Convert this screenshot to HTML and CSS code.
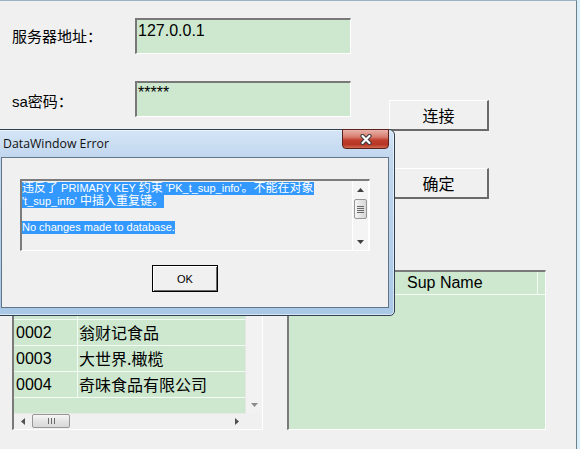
FILE: index.html
```html
<!DOCTYPE html>
<html lang="zh">
<head>
<meta charset="utf-8">
<title>DataWindow</title>
<link rel="stylesheet" href="styles.css">
</head>
<body>
<div class="window">
  <div class="form">
    <div class="row">
      <span class="label label-1">服务器地址：</span>
      <div class="field">127.0.0.1</div>
    </div>
    <div class="row row-pwd">
      <span class="label label-2">sa密码：</span>
      <div class="field field-pwd">*****</div>
      <button class="btn btn-connect">连接</button>
    </div>
    <div class="row row-ok">
      <button class="btn btn-confirm">确定</button>
    </div>
    <div class="grids">
      <div class="dw dw-list">
        <div class="dw-data">
          <div class="dw-row dw-head"><span class="c1"></span><span class="c2"></span></div>
          <div class="dw-row"><span class="c1"></span><span class="c2"></span></div>
          <div class="dw-row"><span class="c1">0002</span><span class="c2">翁财记食品</span></div>
          <div class="dw-row"><span class="c1">0003</span><span class="c2">大世界.橄榄</span></div>
          <div class="dw-row"><span class="c1">0004</span><span class="c2">奇味食品有限公司</span></div>
        </div>
        <div class="vsb">
          <div class="sb-btn"><svg width="7" height="4" viewBox="0 0 7 4"><polygon points="0,4 7,4 3.5,0" fill="#a6a6a6"/></svg></div>
          <div class="sb-track"></div>
          <div class="sb-btn"><svg width="7" height="4" viewBox="0 0 7 4"><polygon points="0,0 7,0 3.5,4" fill="#8c8c8c"/></svg></div>
        </div>
        <div class="hsb">
          <div class="sb-btn"><svg width="4" height="7" viewBox="0 0 4 7"><polygon points="4,0 4,7 0,3.5" fill="#505050"/></svg></div>
          <div class="hthumb"><svg width="7" height="6" viewBox="0 0 7 6"><path d="M0.5 0v6M3.5 0v6M6.5 0v6" stroke="#6a6a6a" stroke-width="1"/></svg></div>
          <div class="sb-track"></div>
          <div class="sb-btn"><svg width="4" height="7" viewBox="0 0 4 7"><polygon points="0,0 0,7 4,3.5" fill="#505050"/></svg></div>
        </div>
        <div class="sb-corner"></div>
      </div>
      <div class="dw dw-detail">
        <div class="dw-head2"><span class="h1"></span><span class="h2">Sup Name</span><span class="h3"></span></div>
      </div>
    </div>
  </div>

  <div class="dialog">
    <div class="dlg-title">DataWindow Error</div>
    <div class="dlg-close"><svg width="14" height="11" viewBox="0 0 14 11"><path d="M3.5 2L10.5 9M10.5 2L3.5 9" stroke="#3a3a3a" stroke-width="4.2" stroke-linecap="round"/><path d="M3.5 2L10.5 9M10.5 2L3.5 9" stroke="#ffffff" stroke-width="2.2" stroke-linecap="round"/></svg></div>
    <div class="dlg-client">
      <div class="msgbox">
        <div class="msg-text">
          <div class="ln"><span class="sel"><span class="zh">违反了</span> PRIMARY KEY <span class="zh">约束</span> 'PK_t_sup_info'<span class="zh">。不能在对象</span></span></div>
          <div class="ln"><span class="sel">'t_sup_info' <span class="zh">中插入重复键。</span></span></div>
          <div class="ln"></div>
          <div class="ln"><span class="sel">No changes made to database.</span></div>
        </div>
        <div class="msg-sb">
          <div class="sb-btn"><svg width="7" height="4" viewBox="0 0 7 4"><polygon points="0,4 7,4 3.5,0" fill="#404040"/></svg></div>
          <div class="vthumb"><svg width="7" height="7" viewBox="0 0 7 7"><path d="M0 0.5h7M0 2.5h7M0 4.5h7M0 6.5h7" stroke="#6a6a6a" stroke-width="1"/></svg></div>
          <div class="sb-track"></div>
          <div class="sb-btn"><svg width="7" height="4" viewBox="0 0 7 4"><polygon points="0,0 7,0 3.5,4" fill="#404040"/></svg></div>
        </div>
      </div>
      <button class="ok-btn">OK</button>
    </div>
  </div>
</div>
</body>
</html>
```

FILE: styles.css
```css
* { box-sizing: border-box; }

body {
  margin: 0;
  width: 580px;
  height: 449px;
  overflow: hidden;
  background: #d8eef8;
  font-family: "Liberation Sans", "Noto Sans CJK SC", sans-serif;
  color: #000;
}

.window {
  position: relative;
  width: 577px;
  height: 449px;
  background: #f0f0f0;
  border-top: 1px solid #9fb2c4;
  border-right: 1px solid #6f7f8d;
}

.form {
  padding: 17px 0 0 12px;
  display: flex;
  flex-direction: column;
  align-items: flex-start;
}

.row {
  display: flex;
  align-items: flex-start;
}

.label {
  width: 123px;
  font-size: 15px;
  line-height: 20px;
  font-family: "Liberation Sans", "Noto Sans CJK SC", sans-serif;
}
.label-1 { padding-top: 9px; }
.label-2 { padding-top: 11px; }

.field {
  width: 216px;
  height: 36px;
  background: #cde8cf;
  border-style: solid;
  border-width: 2px 1px 1px 2px;
  border-color: #787878 #ffffff #ffffff #787878;
  font-size: 16px;
  line-height: 18px;
  padding: 2px 0 0 1px;
}

.row-pwd { margin-top: 27px; }
.field-pwd { padding-top: 1px; }

.btn {
  width: 100px;
  height: 31px;
  padding: 0;
  background: #f0f0f0;
  border-style: solid;
  border-width: 1px 2px 2px 1px;
  border-color: #ffffff #6a6a6a #6a6a6a #ffffff;
  font-family: "Noto Sans CJK SC", sans-serif;
  font-size: 16px;
  line-height: 20px;
  color: #000;
}
.btn-connect { margin-left: 38px; margin-top: 19px; }
.row-ok { margin-top: 37px; }
.btn-confirm { margin-left: 377px; }

.grids {
  margin-top: 71px;
  display: flex;
  gap: 24px;
}

/* ---- DataWindow list ---- */
.dw {
  height: 160px;
  border-style: solid;
  border-width: 2px 1px 1px 2px;
  border-color: #7a7a7a #ffffff #ffffff #7a7a7a;
}

.dw-list {
  width: 251px;
  display: grid;
  grid-template-columns: 1fr 17px;
  grid-template-rows: 1fr 16px;
}

.dw-data {
  background: #cde8cf;
  overflow: hidden;
}

.dw-row {
  display: flex;
  height: 26px;
  border-bottom: 1px solid #f4fbf4;
  font-size: 16px;
  line-height: 25px;
  white-space: nowrap;
}
.dw-head { height: 22px; line-height: 21px; }

.dw-row .c1 {
  width: 64px;
  padding-left: 2px;
  border-right: 1px solid #f4fbf4;
}
.dw-row .c2 {
  padding-left: 1px;
  font-family: "Noto Sans CJK SC", sans-serif;
}

.vsb {
  display: flex;
  flex-direction: column;
  background: #f2f2f2;
  border-left: 1px solid #e6e6e6;
}
.sb-btn {
  flex: 0 0 17px;
  display: flex;
  align-items: center;
  justify-content: center;
}
.sb-track { flex: 1; }

.hsb {
  display: flex;
  background: #f0f0f0;
  border-top: 1px solid #e8e8e8;
}
.hsb .sb-btn { flex-basis: 17px; }
.hthumb {
  width: 38px;
  margin: 0 0 1px 1px;
  border: 1px solid #979797;
  border-radius: 2px;
  background: linear-gradient(#f6f6f6, #e4e4e4 50%, #d8d8d8);
  display: flex;
  align-items: center;
  justify-content: center;
}
.sb-corner { background: #f0f0f0; }

/* ---- DataWindow detail ---- */
.dw-detail {
  width: 259px;
  background: #cde8cf;
}
.dw-head2 {
  display: flex;
  height: 23px;
  border-bottom: 1px solid #f4fbf4;
  font-size: 16px;
  line-height: 22px;
}
.dw-head2 .h1 { width: 106px; border-right: 1px solid #f4fbf4; }
.dw-head2 .h2 { width: 143px; padding-left: 12px; border-right: 1px solid #f4fbf4; }
.dw-head2 .h3 { flex: 1; }

/* ---- Dialog ---- */
.dialog {
  position: absolute;
  left: -6px;
  top: 128px;
  width: 401px;
  height: 187px;
  border: 1px solid #2f4052;
  border-radius: 6px 6px 5px 5px;
  background: linear-gradient(180deg, #d4e5f6 0, #c2d8ef 26px, #b4cfea 60%, #a9c8e6 100%);
  box-shadow: inset 0 0 0 1px rgba(255, 255, 255, 0.55);
  padding: 0 5px 7px 6px;
  display: flex;
  flex-direction: column;
}

.dlg-title {
  height: 27px;
  padding-left: 2px;
  font-family: "Open Sans", "Noto Sans", sans-serif;
  font-size: 12.3px;
  line-height: 27px;
  color: #111;
}

.dlg-close {
  position: absolute;
  left: 347px;
  top: -1px;
  width: 47px;
  height: 20px;
  border: 1px solid #5b221c;
  border-radius: 0 0 4px 4px;
  background: linear-gradient(180deg, #e9b3aa 0, #d77a6c 40%, #c2402f 55%, #b73524 80%, #cf6a4e 100%);
  display: flex;
  align-items: center;
  justify-content: center;
}

.dlg-client {
  flex: 1;
  background: #f0f0f0;
  border: 1px solid #617488;
  padding: 21px 0 0 18px;
  display: flex;
  flex-direction: column;
  align-items: flex-start;
}

.msgbox {
  width: 350px;
  height: 72px;
  display: flex;
  border-style: solid;
  border-width: 2px 1px 1px 2px;
  border-color: #7c7c7c #ffffff #ffffff #7c7c7c;
  background: #f0f0f0;
}

.msg-text {
  flex: 1;
  padding: 1px 0 0 0;
  font-size: 11px;
}
.ln {
  height: 13px;
  line-height: 13px;
  white-space: pre;
}
.sel {
  display: inline-block;
  height: 13px;
  line-height: 13px;
  vertical-align: top;
  background: #3399ff;
  color: #fff;
  white-space: pre;
}
.zh {
  font-family: "Noto Sans CJK SC", sans-serif;
  font-size: 12px;
  line-height: 0;
}

.msg-sb {
  width: 17px;
  display: flex;
  flex-direction: column;
  background: #f4f4f4;
  border-left: 1px solid #ffffff;
  border-right: 1px solid #ffffff;
}
.vthumb {
  height: 20px;
  margin: 1px 1px 0 1px;
  border: 1px solid #979797;
  border-radius: 2px;
  background: linear-gradient(90deg, #f6f6f6, #e4e4e4 50%, #d8d8d8);
  display: flex;
  align-items: center;
  justify-content: center;
}

.ok-btn {
  margin: 14px 0 0 132px;
  width: 66px;
  height: 27px;
  padding: 0;
  background: #f0f0f0;
  border: 1px solid #000;
  box-shadow: inset 1px 1px 0 #ffffff, inset -1px -1px 0 #6a6a6a;
  font-family: "Liberation Sans", sans-serif;
  font-size: 11px;
  color: #000;
}
```
